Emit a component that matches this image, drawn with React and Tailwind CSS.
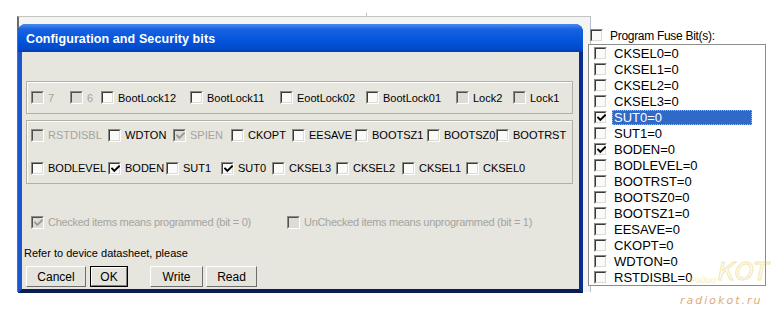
import React from "react";

function Check({ color = "#000" }) {
  return (
    <svg className="absolute left-[1px] top-[1px]" width="9" height="9" viewBox="0 0 9 9">
      <path d="M1 3.5 L3.3 6 L8 1.3" fill="none" stroke={color} strokeWidth="1.9" strokeLinecap="square" />
    </svg>
  );
}

function Box({ checked = false, disabled = false }) {
  return (
    <span className="relative inline-block w-[13px] h-[13px] shrink-0 border border-t-[#8a8a86] border-l-[#8a8a86] border-b-[#ffffff] border-r-[#ffffff]">
      <span
        className={
          disabled
            ? "absolute inset-0 border border-t-[#505050] border-l-[#505050] border-b-[#dcdcd4] border-r-[#dcdcd4] bg-[#dedcd4]"
            : "absolute inset-0 border border-t-[#3a3a3a] border-l-[#3a3a3a] border-b-[#dcdcd4] border-r-[#dcdcd4] bg-[#fafaf8]"
        }
      >
        {checked ? <Check color={disabled ? "#9a9a96" : "#000"} /> : null}
      </span>
    </span>
  );
}

function Item({ label, w, checked, disabled, boxDisabled }) {
  return (
    <div className="flex items-center shrink-0 h-[14px]" style={{ width: w }}>
      <Box checked={checked} disabled={boxDisabled || disabled} />
      <span className={disabled ? "ml-[4px] text-[#a4a4a0] whitespace-nowrap" : "ml-[4px] text-black whitespace-nowrap"}>{label}</span>
    </div>
  );
}

const row1 = [
  { label: "7", w: 39, disabled: true },
  { label: "6", w: 31, disabled: true },
  { label: "BootLock12", w: 89 },
  { label: "BootLock11", w: 90 },
  { label: "EootLock02", w: 86 },
  { label: "BootLock01", w: 90 },
  { label: "Lock2", w: 57, boxDisabled: true },
  { label: "Lock1", w: 55, boxDisabled: true },
];
const rowA = [
  { label: "RSTDISBL", w: 77, disabled: true },
  { label: "WDTON", w: 65 },
  { label: "SPIEN", w: 58, disabled: true, checked: true },
  { label: "CKOPT", w: 61 },
  { label: "EESAVE", w: 63 },
  { label: "BOOTSZ1", w: 72 },
  { label: "BOOTSZ0", w: 69 },
  { label: "BOOTRST", w: 70 },
];
const rowB = [
  { label: "BODLEVEL", w: 77 },
  { label: "BODEN", w: 58, checked: true },
  { label: "SUT1", w: 55 },
  { label: "SUT0", w: 51, checked: true },
  { label: "CKSEL3", w: 64 },
  { label: "CKSEL2", w: 66 },
  { label: "CKSEL1", w: 64 },
  { label: "CKSEL0", w: 70 },
];

const fuses = [
  { t: "CKSEL0=0" },
  { t: "CKSEL1=0" },
  { t: "CKSEL2=0" },
  { t: "CKSEL3=0" },
  { t: "SUT0=0", c: true, sel: true },
  { t: "SUT1=0" },
  { t: "BODEN=0", c: true },
  { t: "BODLEVEL=0" },
  { t: "BOOTRST=0" },
  { t: "BOOTSZ0=0" },
  { t: "BOOTSZ1=0" },
  { t: "EESAVE=0" },
  { t: "CKOPT=0" },
  { t: "WDTON=0" },
  { t: "RSTDISBL=0" },
];

function Btn({ children, w, def }) {
  if (def) {
    return (
      <div className="h-[21px] border border-black" style={{ width: w }}>
        <div className="h-full border border-t-white border-l-white border-b-[#808080] border-r-[#808080] bg-[#e4e3dc] flex items-center justify-center text-[12px] text-black">
          {children}
        </div>
      </div>
    );
  }
  return (
    <div
      className="h-[21px] border border-t-white border-l-white border-b-[#6e6e6a] border-r-[#6e6e6a] bg-[#e4e3dc] flex items-center justify-center text-[12px] text-black"
      style={{ width: w }}
    >
      {children}
    </div>
  );
}

export default function App() {
  return (
    <div className="relative w-[773px] h-[316px] bg-white overflow-hidden font-['Liberation_Sans',Arial,sans-serif]">
      {/* window behind */}
      <div className="absolute left-[17px] top-[16px] w-[574px] h-[276px] border-t border-t-[#c4c4c0] border-l-2 border-l-[#6a6a70] border-r border-r-[#b8c0d0] bg-[#f4f4f2]" />
      <div className="absolute left-[366px] top-[13px] w-[1px] h-[4px] bg-[#c0c0c0]" />

      <div className="relative flex pl-[18px] pt-[24px] gap-[5px]">
        {/* dialog */}
        <div className="w-[565px] h-[269px] flex flex-col rounded-t-[8px] overflow-hidden bg-[#0a3fb0]">
          <div className="h-[28px] shrink-0 flex items-center pl-[8px] bg-[linear-gradient(180deg,#4a8cf0_0%,#1a62e0_18%,#0556dc_55%,#0349c8_90%,#0a3aa8_100%)]">
            <span className="text-white text-[12.5px] font-bold tracking-[0.1px] pt-[2px]">Configuration and Security bits</span>
          </div>
          <div className="flex-1 flex border-l-[4px] border-l-[#1c56cc] border-r-[4px] border-r-[#0a2c8c] border-b-[4px] border-b-[#0a1d56]">
            <div className="flex-1 bg-[#e6e5de] flex flex-col text-[11px] leading-[14px]">
              {/* group 1 */}
              <div className="mt-[29px] ml-[4px] mr-[6px] h-[33px] border border-[#b0b0a8] shadow-[inset_1px_1px_0_#ffffff] flex items-center pl-[4px]">
                {row1.map((it) => (
                  <Item key={it.label} {...it} />
                ))}
              </div>
              {/* group 2 */}
              <div className="mt-[6px] ml-[4px] mr-[6px] h-[64px] border border-[#b0b0a8] shadow-[inset_1px_1px_0_#ffffff] flex flex-col pl-[4px] pt-[7px] gap-[19px]">
                <div className="flex items-center">
                  {rowA.map((it) => (
                    <Item key={it.label} {...it} />
                  ))}
                </div>
                <div className="flex items-center">
                  {rowB.map((it) => (
                    <Item key={it.label} {...it} />
                  ))}
                </div>
              </div>
              {/* legend */}
              <div className="mt-[31px] pl-[9px] flex items-center text-[#a4a4a0]">
                <div className="flex items-center w-[256px]">
                  <Box checked disabled />
                  <span className="ml-[4px] whitespace-nowrap tracking-[-0.3px]">Checked items means programmed (bit = 0)</span>
                </div>
                <div className="flex items-center">
                  <Box disabled />
                  <span className="ml-[4px] whitespace-nowrap tracking-[-0.3px]">UnChecked items means unprogrammed (bit = 1)</span>
                </div>
              </div>
              <div className="mt-[17px] pl-[2px] text-black whitespace-nowrap">Refer to device datasheet, please</div>
              <div className="mt-[6px] pl-[4px] flex">
                <Btn w={60}>Cancel</Btn>
                <div className="ml-[4px]">
                  <Btn w={38} def>OK</Btn>
                </div>
                <div className="ml-[22px]">
                  <Btn w={53}>Write</Btn>
                </div>
                <div className="ml-[3px]">
                  <Btn w={51}>Read</Btn>
                </div>
              </div>
            </div>
          </div>
        </div>

        {/* right panel */}
        <div className="w-[178px] flex flex-col">
          <div className="mt-[4px] h-[15px] flex items-center pl-[2px]">
            <Box />
            <span className="ml-[7px] text-[12px] tracking-[-0.3px] text-black whitespace-nowrap">Program Fuse Bit(s):</span>
          </div>
          <div className="mt-[1px] h-[242px] border border-[#8c8c88] bg-white flex flex-col pt-[1px]">
            {fuses.map((f) => (
              <div key={f.t} className="h-[16px] flex items-center pl-[5px]">
                <Box checked={f.c} />
                {f.sel ? (
                  <span className="ml-[5px] w-[140px] h-[15px] bg-[#3169c6] outline outline-1 outline-dotted outline-[#9ab8ea] -outline-offset-1 pl-[2px] text-white text-[13px] leading-[15px] whitespace-nowrap">
                    {f.t}
                  </span>
                ) : (
                  <span className="ml-[7px] text-black text-[13px] leading-[15px] whitespace-nowrap">{f.t}</span>
                )}
              </div>
            ))}
          </div>
        </div>
      </div>

      {/* watermark */}
      <div className="absolute left-[690px] top-[258px] flex items-end italic text-[#f2e27a] opacity-50 pointer-events-none">
        <span className="text-[9px] leading-[12px] mr-[2px]">Радио</span>
        <span className="text-[24px] leading-[28px] font-['DejaVu_Sans',sans-serif] [-webkit-text-stroke:1px_#e8cf5a] text-transparent">КОТ</span>
      </div>
      <div className="absolute left-[680px] top-[293px] italic text-[11px] tracking-[2px] text-[#e0aa7c] font-['DejaVu_Sans',sans-serif]">radiokot.ru</div>
    </div>
  );
}
